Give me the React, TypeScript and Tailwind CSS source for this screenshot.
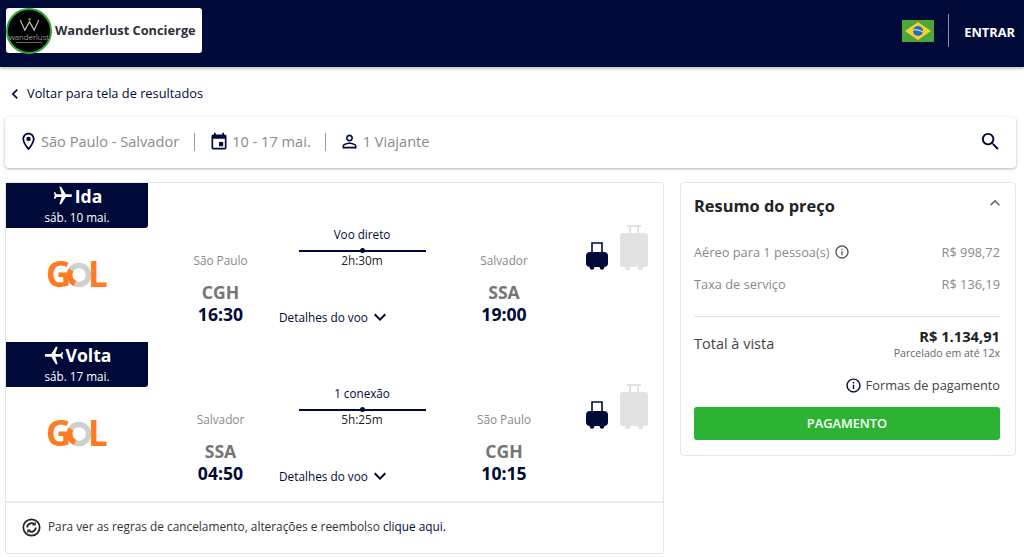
import React from "react";

const NAVY = "#000a38";

// material icon paths
const icons = {
  room: "M12 2C8.13 2 5 5.13 5 9c0 5.25 7 13 7 13s7-7.75 7-13c0-3.87-3.13-7-7-7zM7 9c0-2.76 2.24-5 5-5s5 2.24 5 5c0 2.88-2.88 7.19-5 9.88C9.92 16.21 7 11.85 7 9zM12 6.500a2.500 2.500 0 1 0 0 5 2.500 2.500 0 0 0 0-5z",
  person:
    "M12 5.900c1.160 0 2.100.940 2.100 2.100s-.940 2.100-2.100 2.100S9.900 9.160 9.900 8s.940-2.100 2.100-2.100m0 9c2.970 0 6.100 1.460 6.100 2.100v1.100H5.900V17c0-.640 3.130-2.100 6.100-2.100M12 4C9.790 4 8 5.790 8 8s1.790 4 4 4 4-1.790 4-4-1.790-4-4-4zm0 9c-2.670 0-8 1.340-8 4v3h16v-3c0-2.660-5.330-4-8-4z",
  search:
    "M15.500 14h-.790l-.280-.270C15.410 12.590 16 11.110 16 9.500 16 5.910 13.090 3 9.500 3S3 5.910 3 9.500 5.910 16 9.500 16c1.610 0 3.090-.590 4.230-1.570l.270.280v.790l5 4.990L20.490 19l-4.990-5zm-6 0C7.010 14 5 11.990 5 9.500S7.010 5 9.500 5 14 7.010 14 9.500 11.990 14 9.500 14z",
  event:
    "M17 12h-5v5h5v-5zM16 1v2H8V1H6v2H5c-1.110 0-1.990.900-1.990 2L3 19c0 1.100.890 2 2 2h14c1.100 0 2-.900 2-2V5c0-1.100-.900-2-2-2h-1V1h-2zm3 18H5V8h14v11z",
  info: "M11 7h2v2h-2zm0 4h2v6h-2zm1-9C6.480 2 2 6.480 2 12s4.480 10 10 10 10-4.480 10-10S17.520 2 12 2zm0 18c-4.410 0-8-3.590-8-8s3.590-8 8-8 8 3.590 8 8-3.590 8-8 8z",
  expandMore: "M16.590 8.590L12 13.170 7.410 8.590 6 10l6 6 6-6z",
  expandLess: "M12 8l-6 6 1.410 1.410L12 10.830l4.590 4.580L18 14z",
  chevronLeft: "M15.410 7.410L14 6l-6 6 6 6 1.410-1.410L10.830 12z",
  flight: "M21 16v-2l-8-5V3.500c0-.830-.670-1.500-1.500-1.500S10 2.670 10 3.500V9l-8 5v2l8-2.500V19l-2 1.500V22l3.500-1 3.500 1v-1.500L13 19v-5.500l8 2.500z",
};

const Icon = ({ d, className }: { d: string; className: string }) => (
  <svg viewBox="0 0 24 24" fill="currentColor" className={className}>
    <path d={d} />
  </svg>
);

const SmallBag = () => (
  <svg viewBox="0 0 22 29" className="h-[29px] w-[22px]">
    <path d="M6 13V2h10v11" fill="none" stroke={NAVY} strokeWidth="1.600" />
    <rect x="0" y="11" width="22" height="15" rx="4" fill={NAVY} />
    <circle cx="6" cy="26.500" r="2.300" fill={NAVY} />
    <circle cx="16" cy="26.500" r="2.300" fill={NAVY} />
  </svg>
);

const BigBag = () => (
  <svg viewBox="0 0 28 46" className="h-[46px] w-[28px]" fill="#e2e2e2">
    <path d="M7 1h14v2h-2v6h-2V3h-6v6H9V3H7z" />
    <rect x="0" y="9" width="28" height="34" rx="3" />
    <rect x="5" y="42" width="5" height="4" rx="1.500" />
    <rect x="18" y="42" width="5" height="4" rx="1.500" />
  </svg>
);

const GolLogo = () => (
  <svg viewBox="0 0 60 26" className="h-[26px] w-[60px] overflow-visible">
    <text x="-1" y="25" fontFamily="'Open Sans', sans-serif" fontWeight="700" fontSize="35" fill="#ff7a22">
      G
    </text>
    <circle cx="32" cy="13" r="9.500" fill="none" stroke="#cfcfcf" strokeWidth="5.500" />
    <path d="M24 8A9.500 9.500 0 0 0 28 21.600" fill="none" stroke="#ff7a22" strokeWidth="5.500" />
    <text x="41" y="25" fontFamily="'Open Sans', sans-serif" fontWeight="700" fontSize="35" fill="#ff7a22">
      L
    </text>
  </svg>
);

const Segment = ({
  title,
  date,
  flip,
  from,
  fromCode,
  fromTime,
  to,
  toCode,
  toTime,
  stops,
  duration,
}: {
  title: string;
  date: string;
  flip?: boolean;
  from: string;
  fromCode: string;
  fromTime: string;
  to: string;
  toCode: string;
  toTime: string;
  stops: string;
  duration: string;
}) => (
  <div className="flex h-[159px]">
    <div className="w-[142px]">
      <div className="flex h-[45px] flex-col items-center rounded-br-[3px] bg-[#000a38] text-white">
        <div className="flex h-[26px] items-center gap-[1px] text-[17.6px] font-bold">
          <Icon d={icons.flight} className={`h-[22px] w-[22px] ${flip ? "-rotate-90" : "rotate-90"}`} />
          {title}
        </div>
        <div className="text-[11.7px] leading-[16px]">{date}</div>
      </div>
      <div className="flex justify-center pt-[34px]">
        <GolLogo />
      </div>
    </div>
    <div className="flex w-[145px] flex-col items-center pt-[69px]">
      <div className="text-[11.8px] leading-[16px] text-[#8a8a8a]">{from}</div>
      <div className="mt-[13px] text-[17.6px] font-bold leading-[22px] text-[#757575]">{fromCode}</div>
      <div className="text-[17.6px] font-bold leading-[22px] text-[#000a38]">{fromTime}</div>
    </div>
    <div className="flex w-[138px] flex-col items-center pt-[43px]">
      <div className="text-[11.7px] leading-[16px] text-[#000a38]">{stops}</div>
      <div className="relative mt-[8px] h-[2px] w-[127px] bg-[#000a38]">
        <div className="absolute left-[61px] top-[-2px] h-[5px] w-[5px] rounded-full bg-[#000a38]" />
      </div>
      <div className="text-[11.8px] leading-[16px] text-[#222]">{duration}</div>
      <div className="ml-[-14px] mt-[41px] flex items-center self-start whitespace-nowrap text-[11.8px] leading-[16px] text-[#000a38]">
        Detalhes do voo
        <Icon d={icons.expandMore} className="my-[-4px] h-[24px] w-[24px]" />
      </div>
    </div>
    <div className="flex w-[146px] flex-col items-center pt-[69px]">
      <div className="text-[11.8px] leading-[16px] text-[#8a8a8a]">{to}</div>
      <div className="mt-[13px] text-[17.6px] font-bold leading-[22px] text-[#757575]">{toCode}</div>
      <div className="text-[17.6px] font-bold leading-[22px] text-[#000a38]">{toTime}</div>
    </div>
    <div className="flex items-end gap-[12px] self-start pl-[9px] pt-[41px]">
      <SmallBag />
      <BigBag />
    </div>
  </div>
);

export default function App() {
  return (
    <div className="min-h-[557px] overflow-hidden bg-white font-['Open_Sans',sans-serif] text-[#222]">
      <header className="flex h-[67px] items-center justify-between bg-[#000a38] pb-[6px] pl-[6px] pr-[9px] shadow-[0_1px_4px_rgba(0,0,0,0.35)]">
        <div className="flex h-[45px] w-[196px] items-center rounded-[3px] bg-white">
          <div className="flex h-[46px] w-[46px] shrink-0 flex-col items-center justify-center rounded-full border-2 border-[#2fa52f] bg-black">
            <svg viewBox="0 0 22 15" className="h-[14px] w-[21px]" fill="none" stroke="#c9c9c9" strokeWidth="1.200">
              <path d="M1 2l5 11 5-9 5 9 5-11" />
              <circle cx="11" cy="1.500" r="1.200" fill="#d9a520" stroke="none" />
            </svg>
            <div className="text-[8px] font-light leading-[9px] text-[#d8d8d8]">wanderlust</div>
            <div className="mt-[1px] h-px w-[26px] bg-[#666]" />
          </div>
          <div className="ml-[3px] whitespace-nowrap text-[12.8px] font-bold text-[#2c2f3a]">Wanderlust Concierge</div>
        </div>
        <div className="flex items-center">
          <svg viewBox="0 0 32 22" className="h-[22px] w-[32px]">
            <rect width="32" height="22" fill="#4ca63a" />
            <path d="M16 2l13 9-13 9L3 11z" fill="#f7d032" />
            <circle cx="16" cy="11" r="5" fill="#2b6cb8" />
            <path d="M11.300 10c3-.5 6.500 0 9.300 2" stroke="#fff" strokeWidth="1" fill="none" />
          </svg>
          <div className="ml-[14px] h-[33px] w-px bg-[#8a8fa3]" />
          <div className="ml-[15px] pt-[5px] text-[12.8px] font-bold text-white">ENTRAR</div>
        </div>
      </header>

      <div className="ml-[5px] mt-[17px] flex h-[20px] items-center text-[12.8px] text-[#000a38]">
        <Icon d={icons.chevronLeft} className="h-[20px] w-[20px]" />
        <span className="ml-[2px]">Voltar para tela de resultados</span>
      </div>

      <div className="ml-[5px] mt-[13px] flex h-[51px] w-[1011px] items-center rounded-[4px] bg-white pb-[2px] pl-[13px] pr-[14px] text-[14.6px] text-[#8a8a8a] shadow-[0_1px_3px_rgba(0,0,0,0.3)]">
        <Icon d={icons.room} className="h-[21px] w-[21px] text-[#000a38]" />
        <span className="ml-[2px]">São Paulo - Salvador</span>
        <div className="ml-[15px] h-[18px] w-px bg-[#9a9a9a]" />
        <Icon d={icons.event} className="ml-[14px] h-[20px] w-[20px] text-[#000a38]" />
        <span className="ml-[3px]">10 - 17 mai.</span>
        <div className="ml-[14px] h-[18px] w-px bg-[#9a9a9a]" />
        <Icon d={icons.person} className="ml-[13px] h-[21px] w-[21px] text-[#000a38]" />
        <span className="ml-[3px]">1 Viajante</span>
        <Icon d={icons.search} className="ml-auto h-[23px] w-[23px] text-[#000a38]" />
      </div>

      <div className="mt-[14px] flex items-start pl-[5px]">
        <div className="h-[372px] w-[659px] rounded-[3px] border border-[#e6e6e6]">
          <Segment
            title="Ida"
            date="sáb. 10 mai."
            from="São Paulo"
            fromCode="CGH"
            fromTime="16:30"
            to="Salvador"
            toCode="SSA"
            toTime="19:00"
            stops="Voo direto"
            duration="2h:30m"
          />
          <Segment
            title="Volta"
            date="sáb. 17 mai."
            flip
            from="Salvador"
            fromCode="SSA"
            fromTime="04:50"
            to="São Paulo"
            toCode="CGH"
            toTime="10:15"
            stops="1 conexão"
            duration="5h:25m"
          />
          <div className="flex h-[52px] items-center border-t-2 border-[#eeeeee] pb-[2px] pl-[16px] text-[11.85px] text-[#333]">
            <svg viewBox="0 0 20 20" className="h-[19px] w-[19px]" fill="none" stroke="#222" strokeWidth="1.800">
              <circle cx="10" cy="10" r="8.600" />
              <path d="M5.500 10a4.500 4.500 0 0 1 7.500-3.300M14.500 10A4.500 4.500 0 0 1 7 13.300" />
              <path d="M13.800 4.500v2.800H11M6.200 15.500v-2.800H9" strokeWidth="1.400" />
            </svg>
            <span className="ml-[7px]">
              Para ver as regras de cancelamento, alterações e reembolso <span className="text-[#000a38]">clique aqui.</span>
            </span>
          </div>
        </div>

        <div className="ml-[16px] h-[274px] w-[336px] rounded-[4px] border border-[#e6e6e6] pl-[13px] pr-[15px]">
          <div className="flex items-start justify-between pt-[12px]">
            <div className="text-[16.4px] font-bold leading-[22px] text-[#222]">Resumo do preço</div>
            <Icon d={icons.expandLess} className="mr-[-5px] mt-[-2px] h-[20px] w-[20px] text-[#666]" />
          </div>
          <div className="mt-[26px] flex items-center justify-between text-[12.8px] leading-[18px] text-[#8a8a8a]">
            <div className="flex items-center">
              Aéreo para 1 pessoa(s)
              <Icon d={icons.info} className="ml-[4px] h-[16px] w-[16px] text-[#555]" />
            </div>
            <div>R$ 998,72</div>
          </div>
          <div className="mt-[14px] flex items-center justify-between text-[12.8px] leading-[18px] text-[#8a8a8a]">
            <div>Taxa de serviço</div>
            <div>R$ 136,19</div>
          </div>
          <div className="mt-[23px] border-t border-[#e6e6e6] pt-[9px]">
            <div className="flex items-center justify-between">
              <div className="text-[14.5px] text-[#444]">Total à vista</div>
              <div className="text-right">
                <div className="text-[14.7px] font-bold leading-[20px] text-[#222]">R$ 1.134,91</div>
                <div className="text-[10.6px] leading-[15px] text-[#666]">Parcelado em até 12x</div>
              </div>
            </div>
          </div>
          <div className="mt-[15px] flex items-center justify-end text-[12.8px] leading-[18px] text-[#444]">
            <Icon d={icons.info} className="mr-[4px] h-[17px] w-[17px] text-[#000a38]" />
            Formas de pagamento
          </div>
          <div className="mt-[13px] flex h-[33px] items-center justify-center rounded-[3px] bg-[#2db334] text-[12.8px] font-semibold text-white">
            PAGAMENTO
          </div>
        </div>
      </div>
    </div>
  );
}
